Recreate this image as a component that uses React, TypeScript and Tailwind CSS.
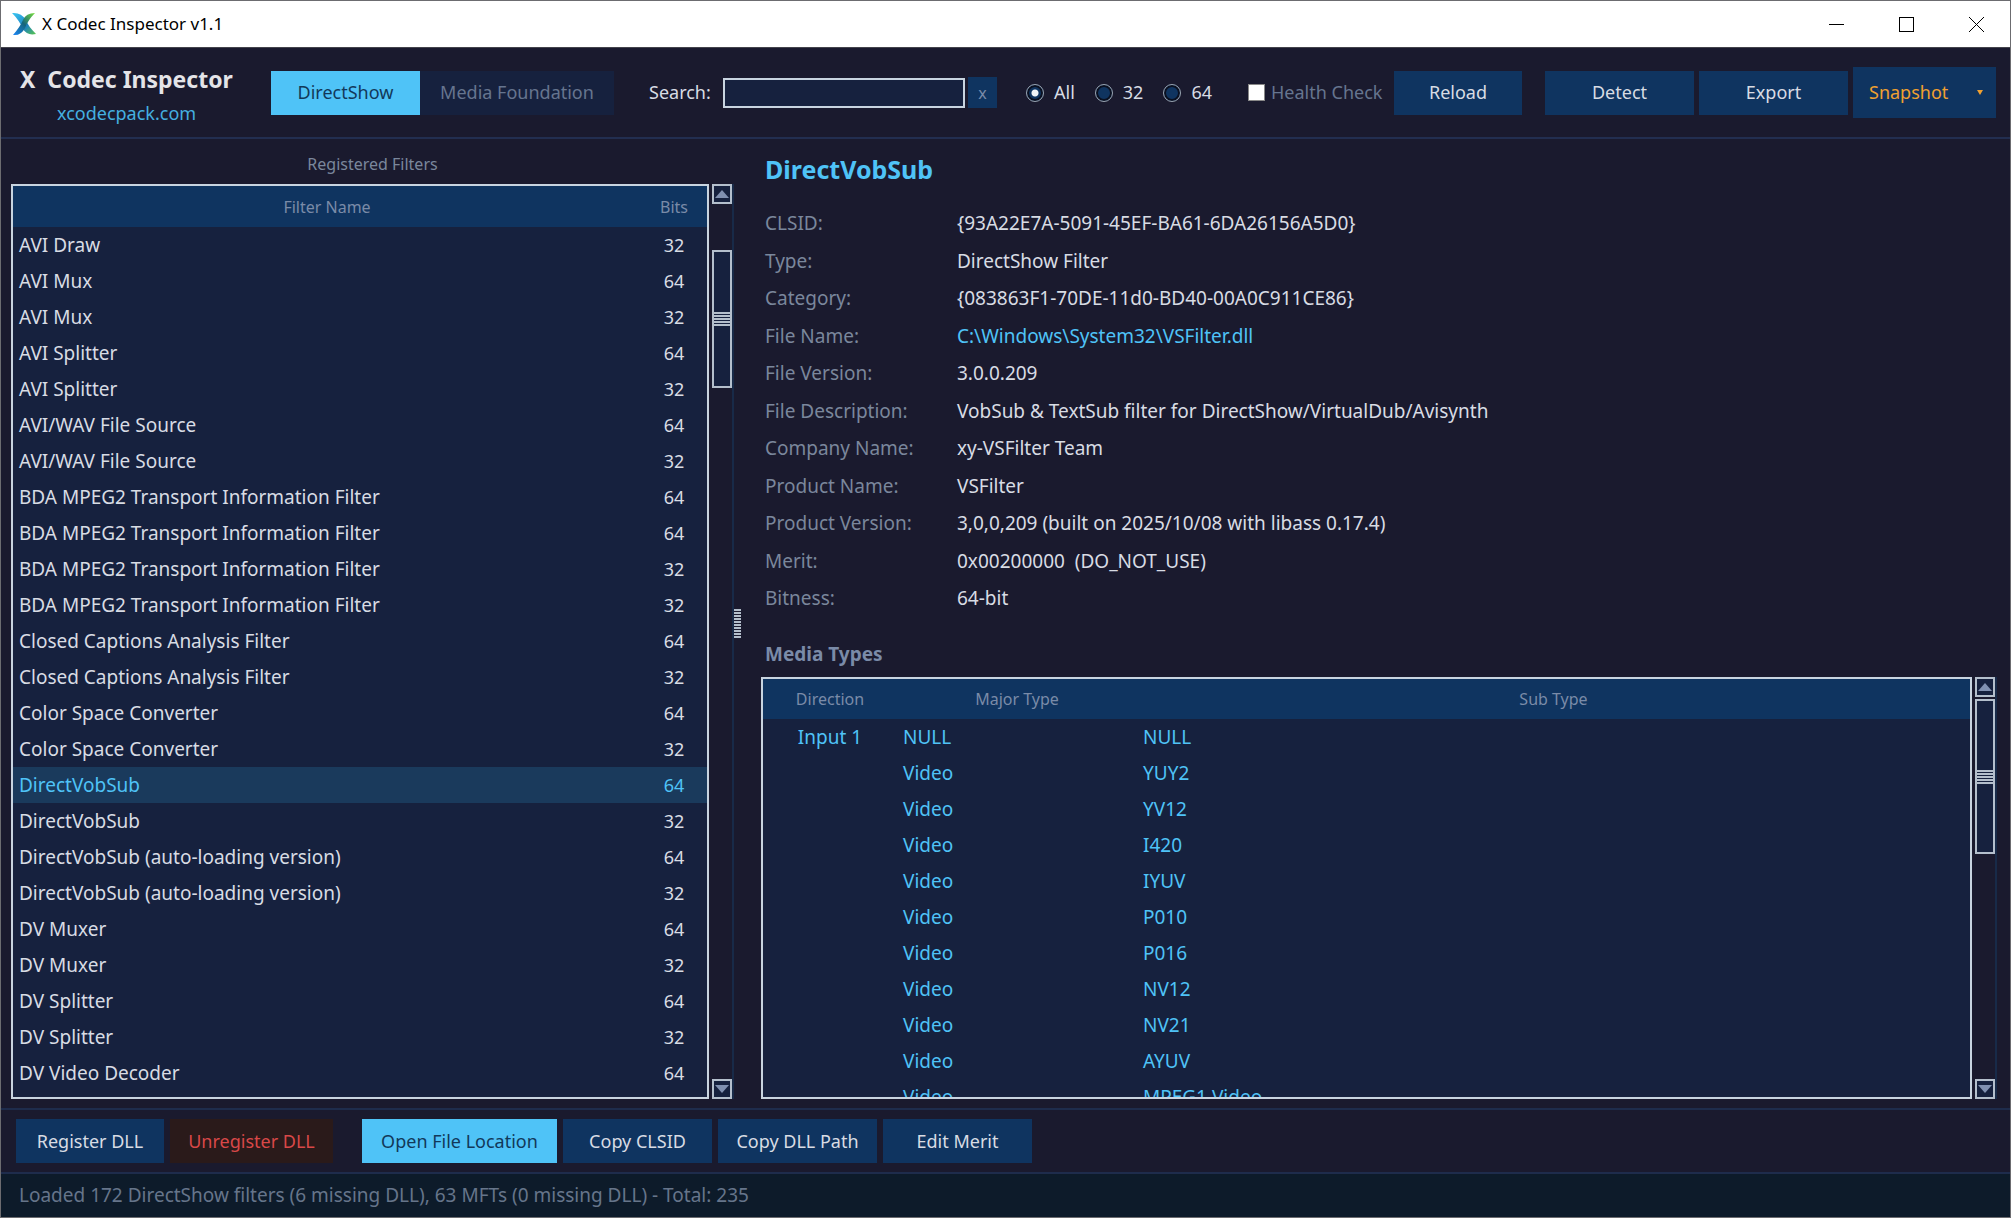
import clsx from 'clsx'

const filters: [string, number][] = [
  ['AVI Draw', 32],
  ['AVI Mux', 64],
  ['AVI Mux', 32],
  ['AVI Splitter', 64],
  ['AVI Splitter', 32],
  ['AVI/WAV File Source', 64],
  ['AVI/WAV File Source', 32],
  ['BDA MPEG2 Transport Information Filter', 64],
  ['BDA MPEG2 Transport Information Filter', 64],
  ['BDA MPEG2 Transport Information Filter', 32],
  ['BDA MPEG2 Transport Information Filter', 32],
  ['Closed Captions Analysis Filter', 64],
  ['Closed Captions Analysis Filter', 32],
  ['Color Space Converter', 64],
  ['Color Space Converter', 32],
  ['DirectVobSub', 64],
  ['DirectVobSub', 32],
  ['DirectVobSub (auto-loading version)', 64],
  ['DirectVobSub (auto-loading version)', 32],
  ['DV Muxer', 64],
  ['DV Muxer', 32],
  ['DV Splitter', 64],
  ['DV Splitter', 32],
  ['DV Video Decoder', 64],
]
const selected = 15

const details = [
  ['CLSID:', '{93A22E7A-5091-45EF-BA61-6DA26156A5D0}'],
  ['Type:', 'DirectShow Filter'],
  ['Category:', '{083863F1-70DE-11d0-BD40-00A0C911CE86}'],
  ['File Name:', 'C:\\Windows\\System32\\VSFilter.dll'],
  ['File Version:', '3.0.0.209'],
  ['File Description:', 'VobSub & TextSub filter for DirectShow/VirtualDub/Avisynth'],
  ['Company Name:', 'xy-VSFilter Team'],
  ['Product Name:', 'VSFilter'],
  ['Product Version:', '3,0,0,209 (built on 2025/10/08 with libass 0.17.4)'],
  ['Merit:', '0x00200000  (DO_NOT_USE)'],
  ['Bitness:', '64-bit'],
]

const subTypes = ['NULL', 'YUY2', 'YV12', 'I420', 'IYUV', 'P010', 'P016', 'NV12', 'NV21', 'AYUV', 'MPEG1 Video']

function Logo() {
  return (
    <svg width="24" height="24" viewBox="0 0 24 24" aria-hidden="true">
      <defs>
        <linearGradient id="blue" x1="0" y1="0" x2="1" y2="1">
          <stop offset="0" stopColor="#3cc8f4" />
          <stop offset="0.6" stopColor="#1a7fc0" />
          <stop offset="1" stopColor="#5cc84a" />
        </linearGradient>
        <linearGradient id="green" x1="1" y1="0" x2="0" y2="1">
          <stop offset="0" stopColor="#7ae03c" />
          <stop offset="0.5" stopColor="#14657c" />
          <stop offset="1" stopColor="#1a86f8" />
        </linearGradient>
      </defs>
      <path d="M0 1 Q9 0 14 8 Q16 14 24 22 Q15 24 11 17 Q7 8 0 1Z" fill="url(#blue)" />
      <path d="M23 1 Q14 1 11 8 Q8 15 1 23 Q9 24 13 16 Q16 8 23 1Z" fill="url(#green)" />
    </svg>
  )
}

function TitleBar() {
  return (
    <div className="flex h-[47px] items-center justify-between border-b border-[#44444c] bg-white pl-[11px] pr-[26px]">
      <div className="flex items-center gap-1.5">
        <Logo />
        <span className="text-[17px] text-black">X Codec Inspector v1.1</span>
      </div>
      <div className="flex gap-[55px] text-black">
        <button aria-label="Minimize">
          <svg width="15" height="15" viewBox="0 0 15 15" stroke="currentColor" shapeRendering="crispEdges"><path d="M0 7.5H15" /></svg>
        </button>
        <button aria-label="Maximize">
          <svg width="15" height="15" viewBox="0 0 15 15" stroke="currentColor" fill="none" shapeRendering="crispEdges"><path d="M.5 .5H14.5V14.5H.5Z" /></svg>
        </button>
        <button aria-label="Close">
          <svg width="15" height="15" viewBox="0 0 15 15" stroke="currentColor"><path d="M0 0L15 15M15 0L0 15" /></svg>
        </button>
      </div>
    </div>
  )
}

function ActionButton({ label, className }: { label: string; className: string }) {
  return <button className={clsx('h-11 shrink-0 whitespace-nowrap', className)}>{label}</button>
}

function BitsRadio({ label, checked }: { label: string; checked?: boolean }) {
  return (
    <label className="flex items-center gap-2.5">
      <input
        type="radio"
        name="bits"
        defaultChecked={checked}
        className="size-[18px] appearance-none rounded-full border border-[#9aa4b0] bg-[#0f3460] ring-2 ring-inset ring-[#0a1020] checked:bg-[radial-gradient(circle,#f0f4f8_3px,#0f3460_4px)]"
      />
      {label}
    </label>
  )
}

function Toolbar() {
  return (
    <header className="flex h-[91px] items-center border-b-2 border-[#222e50] pl-[19px] pr-3.5 text-[18px]">
      <div className="flex w-[251px] shrink-0 flex-col pt-2">
        <h1 className="whitespace-pre text-[23px] leading-8 font-bold text-[#e4e4e8]">X  Codec Inspector</h1>
        <a href="#" className="ml-[37px] text-[18px] leading-9 text-[#45b0e0]">xcodecpack.com</a>
      </div>
      <ActionButton label="DirectShow" className="w-[149px] bg-[#4fc3f7] text-[#12395a]" />
      <ActionButton label="Media Foundation" className="w-[194px] bg-[#16213e] text-[#66758f]" />
      <label htmlFor="search" className="ml-[35px] w-[74px]">Search:</label>
      <input id="search" className="h-[30px] w-[242px] border-2 border-[#c8d4e0] bg-[#16213e] px-1 outline-none" />
      <button aria-label="Clear search" className="ml-[3px] flex h-[31px] w-[29px] items-center justify-center bg-[#0f3460] text-[16px] text-[#7a8ba8]">x</button>
      <div className="ml-[29px] flex gap-5">
        <BitsRadio label="All" checked />
        <BitsRadio label="32" />
        <BitsRadio label="64" />
      </div>
      <label className="ml-9 flex items-center gap-1.5 whitespace-nowrap text-[#66758f]">
        <input type="checkbox" className="size-[17px] appearance-none border border-[#888] bg-white" />
        Health Check
      </label>
      <div className="ml-auto flex items-center gap-[5px]">
        <ActionButton label="Reload" className="mr-[18px] w-32 bg-[#0f3460]" />
        <ActionButton label="Detect" className="w-[149px] bg-[#0f3460]" />
        <ActionButton label="Export" className="w-[149px] bg-[#0f3460]" />
        <button className="flex h-[51px] w-[143px] items-center justify-between bg-[#0f3460] pl-4 pr-3 text-[#f0a030]">
          Snapshot
          <svg width="8" height="7" viewBox="0 0 8 7" fill="currentColor"><path d="M1 1H7L4 6Z" /></svg>
        </button>
      </div>
    </header>
  )
}

function ScrollBar({ thumb }: { thumb: string }) {
  return (
    <div className="flex w-[22px] shrink-0 flex-col border-r-2 border-[#182a48]">
      <button aria-label="Scroll up" className="flex h-5 items-center justify-center border-2 border-[#b4bfcc] bg-[#16213e]">
        <svg width="14" height="8" viewBox="0 0 14 8" fill="#8090b0"><path d="M7 0L14 8H0Z" /></svg>
      </button>
      <div className={clsx('flex flex-col items-stretch justify-center gap-px border-2 border-[#b4bfcc] bg-[#16213e]', thumb)}>
        {[0, 1, 2, 3, 4].map((i) => (
          <div key={i} className="h-0.5 bg-[#b4bfcc]" />
        ))}
      </div>
      <button aria-label="Scroll down" className="mt-auto flex h-5 items-center justify-center border-2 border-[#b4bfcc] bg-[#16213e]">
        <svg width="14" height="8" viewBox="0 0 14 8" fill="#8090b0"><path d="M7 8L14 0H0Z" /></svg>
      </button>
    </div>
  )
}

function FilterList() {
  return (
    <section className="flex w-[723px] shrink-0 flex-col">
      <h2 className="flex h-[45px] items-center justify-center pt-1 text-[16px] text-[#7a879c]">Registered Filters</h2>
      <div className="flex min-h-0 flex-1 gap-[3px]">
        <div className="flex-1 overflow-hidden border-2 border-[#c8d4e0] bg-[#16213e]">
          <table className="w-full table-fixed">
            <thead>
              <tr className="h-[41px] bg-[#0f3460] text-[16px] text-[#7a8ba8]">
                <th className="font-normal">Filter Name</th>
                <th className="w-[66px] font-normal">Bits</th>
              </tr>
            </thead>
            <tbody>
              {filters.map(([name, bits], i) => (
                <tr key={i} className={clsx('h-9', i === selected && 'bg-[#1a3a5c] text-[#4fc3f7]')}>
                  <td className="pl-1.5">{name}</td>
                  <td className="text-center text-[18px]">{bits}</td>
                </tr>
              ))}
            </tbody>
          </table>
        </div>
        <ScrollBar thumb="mt-[46px] h-[138px]" />
      </div>
    </section>
  )
}

function Details() {
  return (
    <section className="flex min-w-0 flex-1 flex-col">
      <h2 className="mt-2.5 pl-1 text-[25px] leading-10 font-bold text-[#4fc3f7]">DirectVobSub</h2>
      <dl className="mt-4 grid h-[412px] auto-rows-fr grid-cols-[192px_1fr] items-center pl-1">
        {details.map(([label, value]) => (
          <div key={label} className="contents">
            <dt className="text-[#7a879c]">{label}</dt>
            <dd className="whitespace-pre">
              {label === 'File Name:' ? <a href="#" className="text-[#4fc3f7]">{value}</a> : value}
            </dd>
          </div>
        ))}
      </dl>
      <h3 className="mt-4 mb-0.5 pl-1 leading-[42px] font-bold text-[#7a8ba8]">Media Types</h3>
      <div className="flex min-h-0 flex-1 gap-[3px]">
        <div className="flex-1 overflow-hidden border-2 border-[#c8d4e0] bg-[#16213e]">
          <table className="w-full table-fixed">
            <thead>
              <tr className="h-10 bg-[#0f3460] text-[16px] text-[#7a8ba8]">
                <th className="w-[134px] font-normal">Direction</th>
                <th className="w-60 font-normal">Major Type</th>
                <th className="font-normal">Sub Type</th>
              </tr>
            </thead>
            <tbody className="text-[#4fc3f7]">
              {subTypes.map((sub, i) => (
                <tr key={sub} className="h-9">
                  <td className="text-center">{i === 0 && 'Input 1'}</td>
                  <td className="pl-1.5">{i === 0 ? 'NULL' : 'Video'}</td>
                  <td className="pl-1.5">{sub}</td>
                </tr>
              ))}
            </tbody>
          </table>
        </div>
        <ScrollBar thumb="mt-0.5 h-[155px]" />
      </div>
    </section>
  )
}

export default function App() {
  return (
    <div className="flex h-screen flex-col border border-[#6c6c70] bg-[#1a1a2e] font-['Noto_Sans',sans-serif] text-[19px] text-[#d8dce4]">
      <TitleBar />
      <Toolbar />
      <main className="flex min-h-0 flex-1 pb-[9px] pl-2.5 pr-[13px]">
        <FilterList />
        <div className="flex w-[27px] items-center pt-2">
          <div className="flex w-[7px] flex-col gap-px">
            {Array.from({ length: 10 }, (_, i) => (
              <div key={i} className="h-0.5 bg-[#b4bfcc]" />
            ))}
          </div>
        </div>
        <Details />
      </main>
      <div className="flex h-[64px] items-center gap-1.5 border-t-2 border-[#1e2c4c] px-[15px] text-[18px]">
        <ActionButton label="Register DLL" className="w-[148px] bg-[#0f3460]" />
        <ActionButton label="Unregister DLL" className="mr-[23px] w-[163px] bg-[#2a1a1a] text-[#d84848]" />
        <ActionButton label="Open File Location" className="w-[195px] bg-[#4fc3f7] text-[#12395a]" />
        <ActionButton label="Copy CLSID" className="w-[149px] bg-[#0f3460]" />
        <ActionButton label="Copy DLL Path" className="w-[159px] bg-[#0f3460]" />
        <ActionButton label="Edit Merit" className="w-[149px] bg-[#0f3460]" />
      </div>
      <footer className="flex h-[45px] items-center border-t-2 border-[#1e2c4c] bg-[#0d1b2a] pl-[18px] text-[#66758a]">
        Loaded 172 DirectShow filters (6 missing DLL), 63 MFTs (0 missing DLL) - Total: 235
      </footer>
    </div>
  )
}
